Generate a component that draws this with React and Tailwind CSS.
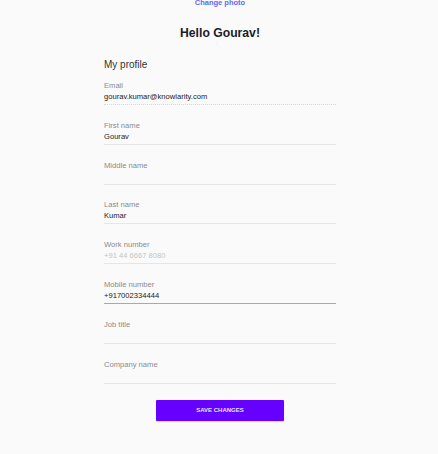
import React from "react";

const fields = [
  { label: "Email", value: "gourav.kumar@knowlarity.com", dotted: true },
  { label: "First name", value: "Gourav" },
  { label: "Middle name", value: "" },
  { label: "Last name", value: "Kumar" },
  { label: "Work number", value: "", placeholder: "+91 44 6667 8080" },
  { label: "Mobile number", value: "+917002334444", focused: true },
  { label: "Job title", value: "" },
  { label: "Company name", value: "" },
];

export default function App() {
  return (
    <div
      className="w-[438px] h-[454px] bg-[#fafafa] overflow-hidden flex flex-col items-center"
      style={{ fontFamily: '"Liberation Sans", Arial, sans-serif' }}
    >
      <div className="-mt-[2px] ml-[2px] h-[10px] leading-[10px] text-[7.5px] font-bold text-[#5b6cf2]">
        Change photo
      </div>
      <div className="mt-[17px] ml-[2px] h-[16px] leading-[16px] text-[12.2px] font-bold text-[#1c1c2c]">
        Hello Gourav!
      </div>
      <div className="w-[232px] ml-[2px] mt-[17px] flex flex-col">
        <div className="h-[14px] leading-[14px] text-[10px] text-[#333]">My profile</div>
        <div className="mt-[9px] flex flex-col">
          {fields.map((f) => (
            <div key={f.label} className="flex flex-col mb-[15.8px]">
              <div className="h-[10px] leading-[10px] text-[7.6px] text-[#8a8a8a]">{f.label}</div>
              <div
                className={
                  "mt-[1px] h-[13px] pb-[2px] leading-[10px] text-[7.6px] " +
                  (f.dotted
                    ? "border-b border-dotted border-[#d8d8d8] text-[#222]"
                    : f.focused
                    ? "border-b border-[#9aa4e8] text-[#222]"
                    : "border-b border-[#e6e6e6] text-[#222]")
                }
              >
                {f.value ? (
                  f.value
                ) : f.placeholder ? (
                  <span className="text-[#c4c4c4]">{f.placeholder}</span>
                ) : null}
              </div>
            </div>
          ))}
        </div>
        <div className="mt-[1px] flex justify-center">
          <button className="w-[128px] h-[21px] bg-[#6600ff] text-[6px] font-bold text-[#e8e0ff] rounded-[1px] shadow-[0_1px_1px_rgba(0,0,0,0.15)]">
            SAVE CHANGES
          </button>
        </div>
      </div>
    </div>
  );
}
